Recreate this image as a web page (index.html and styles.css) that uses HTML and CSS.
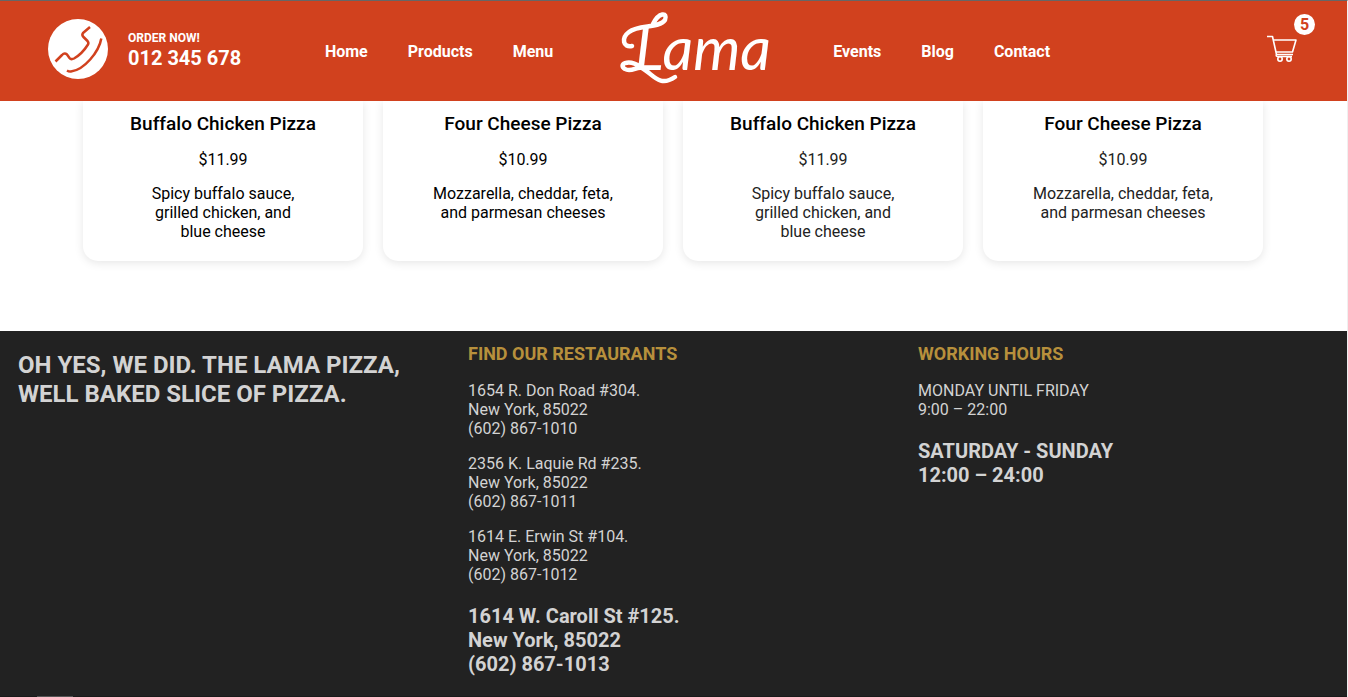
FILE: index.html
```html
<!DOCTYPE html>
<html lang="en">
<head>
<meta charset="utf-8">
<meta name="viewport" content="width=device-width, initial-scale=1">
<title>Lama Pizza</title>
<link rel="stylesheet" href="styles.css">
</head>
<body>
<header class="navbar">
  <div class="call">
    <svg class="call-icon" viewBox="0 0 60 60" aria-hidden="true">
      <circle cx="30" cy="30" r="30" fill="#fff"/>
      <g fill="none" stroke="#d1411e" stroke-width="2.500" stroke-linejoin="round">
        <path d="M7.500 42.500 L14 36 Q16.500 33.300 19 35.500 L21.500 39 Q23 41 26 39.500 Q34 35 40 25.500 Q41 24 39.500 22 L35.500 18 Q33.500 16 35 14 L42 8"/>
        <path d="M53.300 19.500 C51 33 36 51 23 52.500 Q21 52.800 19 51.500"/>
      </g>
    </svg>
    <div class="call-texts">
      <div class="call-label">ORDER NOW!</div>
      <div class="call-number">012 345 678</div>
    </div>
  </div>
  <nav class="menu">
    <a href="#">Home</a>
    <a href="#">Products</a>
    <a href="#">Menu</a>
    <a class="logo" href="#">
      <svg viewBox="0 0 200 90" aria-label="Lama" role="img">
        <g fill="none" stroke="#fff" stroke-width="4.500" stroke-linecap="round">
          <path d="M39 40 C30 42 28 32 36 26 C46 18 66 23 72 14 C75 6 66 6 60 18"/>
          <path d="M48 61 C34 52 25 59 32 63 C38 67 44 60 49 62 C60 68 66 82 82 71"/>
        </g>
        <text class="logo-text" x="42" y="64">Lama</text>
      </svg>
    </a>
    <a href="#">Events</a>
    <a href="#">Blog</a>
    <a href="#">Contact</a>
  </nav>
  <a class="cart" href="#" aria-label="Cart, 5 items">
    <svg class="cart-icon" viewBox="0 0 30 30" aria-hidden="true">
      <g fill="none" stroke="#fff" stroke-width="1.600" stroke-linejoin="round">
        <path d="M0 2.500 H5.500 L9.500 20.500 H26"/>
        <path d="M6.500 6 H29 L25.500 18 H9"/>
        <circle cx="13" cy="25" r="2.200"/>
        <circle cx="22" cy="25" r="2.200"/>
        <path d="M9.500 20.500 Q8.500 22.500 11 22.500 H25"/>
      </g>
    </svg>
    <span class="cart-count">5</span>
  </a>
</header>
<main class="products">
  <article class="card">
    <h2>Buffalo Chicken Pizza</h2>
    <p class="price">$11.99</p>
    <p class="desc">Spicy buffalo sauce, grilled chicken, and<br>blue cheese</p>
  </article>
  <article class="card">
    <h2>Four Cheese Pizza</h2>
    <p class="price">$10.99</p>
    <p class="desc">Mozzarella, cheddar, feta, and parmesan cheeses</p>
  </article>
  <article class="card muted">
    <h2>Buffalo Chicken Pizza</h2>
    <p class="price">$11.99</p>
    <p class="desc">Spicy buffalo sauce, grilled chicken, and<br>blue cheese</p>
  </article>
  <article class="card muted">
    <h2>Four Cheese Pizza</h2>
    <p class="price">$10.99</p>
    <p class="desc">Mozzarella, cheddar, feta, and parmesan cheeses</p>
  </article>
</main>
<footer class="footer">
  <section class="column">
    <p class="motto">OH YES, WE DID. THE LAMA PIZZA, WELL BAKED SLICE OF PIZZA.</p>
  </section>
  <section class="column">
    <h2>FIND OUR RESTAURANTS</h2>
    <p>1654 R. Don Road #304.<br>New York, 85022<br>(602) 867-1010</p>
    <p>2356 K. Laquie Rd #235.<br>New York, 85022<br>(602) 867-1011</p>
    <p>1614 E. Erwin St #104.<br>New York, 85022<br>(602) 867-1012</p>
    <p class="strong">1614 W. Caroll St #125.<br>New York, 85022<br>(602) 867-1013</p>
  </section>
  <section class="column">
    <h2>WORKING HOURS</h2>
    <p>MONDAY UNTIL FRIDAY<br>9:00 – 22:00</p>
    <p class="strong">SATURDAY - SUNDAY<br>12:00 – 24:00</p>
  </section>
</footer>
</body>
</html>
```
FILE: styles.css
```css
* { box-sizing: border-box; }
body {
  margin: 0;
  min-height: 100vh;
  display: flex;
  flex-direction: column;
  border-top: 1px solid #666;
  border-right: 1px solid #f0f0f0;
  background: #fff;
  color: #000;
  font: 16px/19px Roboto, "Liberation Sans", sans-serif;
}
body::after {
  content: "";
  position: fixed;
  left: 37px;
  bottom: 0;
  width: 36px;
  height: 1px;
  background: #555;
}
a { color: inherit; text-decoration: none; }
h2, p { margin: 0; }

.navbar {
  height: 100px;
  padding: 0 50px 0 48px;
  display: flex;
  align-items: center;
  justify-content: space-between;
  background: #d1411e;
  color: #fff;
}
.call { flex: 1; display: flex; align-items: center; gap: 20px; padding-bottom: 4px; }
.call-icon { width: 60px; height: 60px; }
.call-texts { padding-top: 2px; }
.call-label { font-size: 12px; font-weight: 700; line-height: 16px; }
.call-number { font-size: 20px; font-weight: 700; line-height: 24px; }
.menu { display: flex; align-items: center; gap: 40px; padding-left: 30px; font-weight: 700; }
.logo svg { display: block; width: 200px; height: 90px; }
.logo-text { fill: #fff; font: italic 400 60px Lato, sans-serif; }
.cart { position: relative; flex: 1; display: flex; justify-content: flex-end; padding-bottom: 4px; }
.cart-icon { width: 30px; height: 30px; }
.cart-count {
  position: absolute;
  right: -18px;
  top: -20px;
  width: 21px;
  height: 21px;
  border-radius: 50%;
  background: #fff;
  color: #d1411e;
  font-weight: 700;
  line-height: 21px;
  text-align: center;
}

.products {
  display: grid;
  grid-template-columns: repeat(4, minmax(0, 1fr));
  gap: 20px;
  padding: 0 84px 70px 83px;
  overflow: hidden;
}
.card {
  padding: 12px 40px 20px;
  border-radius: 0 0 15px 15px;
  box-shadow: 0 2px 10px rgba(0, 0, 0, 0.1);
  text-align: center;
}
.card h2 { margin: 0 -20px; font-size: 19px; font-weight: 500; line-height: 22px; }
.price { margin-top: 15px; }
.desc { margin: 15px 8px 0; }
.muted p { color: #222; }

.footer {
  flex: 1;
  display: grid;
  grid-template-columns: repeat(3, minmax(0, 1fr));
  column-gap: 3px;
  padding-bottom: 20px;
  border-bottom: 1px solid #1a1a1a;
  background: #222;
  color: lightgray;
}
.column { padding: 12px 18px 0; }
.column h2 { color: #b7903c; font-size: 18px; font-weight: 700; line-height: 22px; }
.column p { margin-top: 16px; }
.column .motto { margin-top: 8px; font-size: 24px; font-weight: 700; line-height: 29px; }
.column .strong { margin-top: 20px; font-size: 20px; font-weight: 700; line-height: 24px; }
```
